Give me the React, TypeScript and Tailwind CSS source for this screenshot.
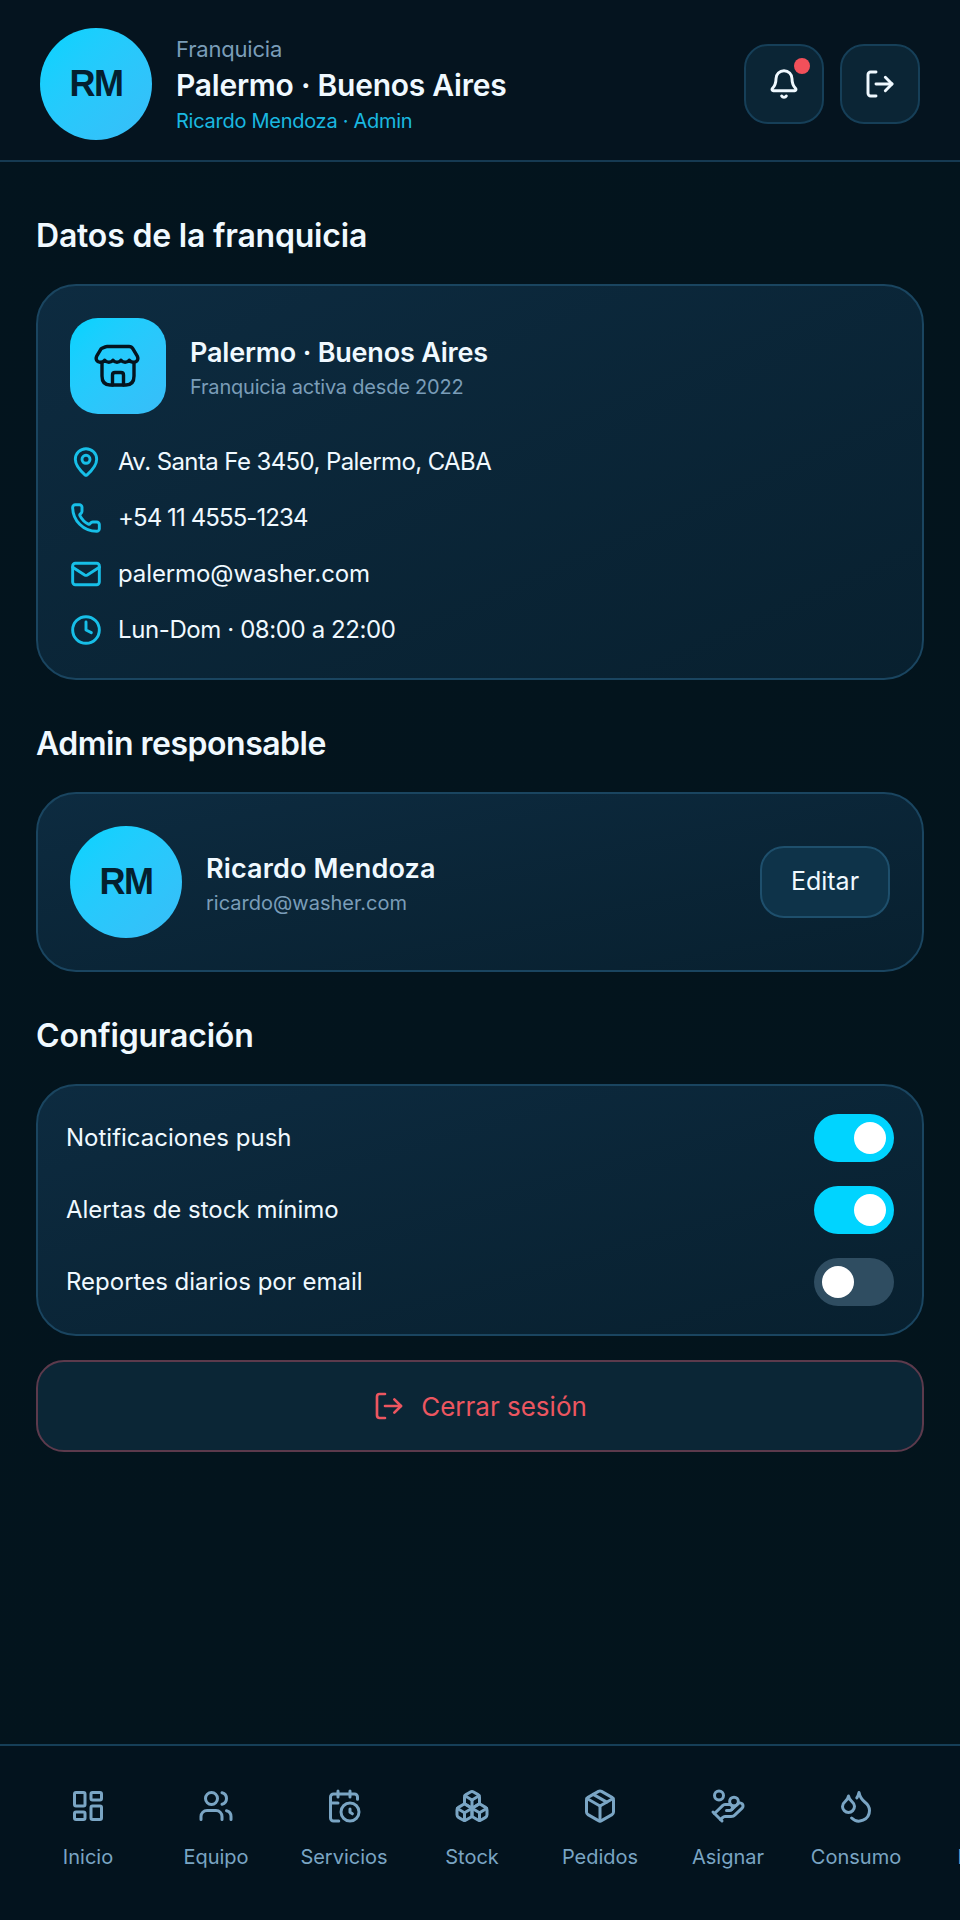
import React from "react";
import { Bell, LogOut, MapPin, Phone, Mail, Clock, LayoutDashboard, Users, CalendarClock, Boxes, Package, HandCoins, Droplets, UserRound } from "lucide-react";

const body = "font-['Inter','Liberation_Sans',sans-serif]";

function StoreIcon() {
  return (
    <svg width="48" height="48" viewBox="0 0 48 48" fill="none" stroke="#04141f" strokeWidth="3.4" strokeLinecap="round" strokeLinejoin="round">
      <path d="M13 4.500h22c1.600 0 3 .8 3.800 2.200l4.500 7.500c1.500 3-.4 6-3.300 6-2 0-3.900-.8-4.700-2-.9 1.200-2.500 2-4.200 2s-3.200-.8-4.100-2c-.9 1.200-2.400 2-4 2s-3.100-.8-4-2c-.9 1.200-2.400 2-4.100 2s-3.300-.8-4.200-2c-.8 1.200-2.700 2-4.700 2-2.900 0-4.800-3-3.300-6l4.500-7.500C10 5.300 11.400 4.500 13 4.500Z" />
      <path d="M8 21v13c0 6 2.500 9 8 9h16c5.500 0 8-3 8-9V21" />
      <path d="M18.500 43V33c0-1.500 1-2.500 2.500-2.500h6c1.500 0 2.500 1 2.500 2.500v10" />
    </svg>
  );
}

function Avatar() {
  return (
    <div className="flex h-[112px] w-[112px] shrink-0 items-center justify-center rounded-full bg-gradient-to-br from-[#00d4ff] to-[#38bdf8]">
      <span className="font-['Liberation_Sans',sans-serif] text-[36px] font-bold tracking-[-1.5px] text-[#04202f]">RM</span>
    </div>
  );
}

function Section({ title, className }: { title: string; className: string }) {
  return <h2 className={`${className} text-[32px] leading-[40px] font-semibold text-[#f0f9ff]`}>{title}</h2>;
}

function Toggle({ on }: { on: boolean }) {
  return (
    <div className={`flex h-[48px] w-[80px] items-center rounded-full px-2 ${on ? "justify-end bg-[#00d4ff]" : "justify-start bg-[#2f4d61]"}`}>
      <div className="h-8 w-8 rounded-full bg-white" />
    </div>
  );
}

const card = "rounded-[40px] border-2 border-[#1a4560] bg-gradient-to-br from-[#0d2b40] to-[#08202f]";

const rows = [
  { Icon: MapPin, text: "Av. Santa Fe 3450, Palermo, CABA", track: "tracking-[-0.6px]" },
  { Icon: Phone, text: "+54 11 4555-1234", track: "tracking-[-0.9px]" },
  { Icon: Mail, text: "palermo@washer.com", track: "tracking-[-0.1px]" },
  { Icon: Clock, text: "Lun-Dom · 08:00 a 22:00", track: "tracking-[-0.4px]" },
];

const nav = [
  { Icon: LayoutDashboard, label: "Inicio", track: "" },
  { Icon: Users, label: "Equipo", track: "" },
  { Icon: CalendarClock, label: "Servicios", track: "" },
  { Icon: Boxes, label: "Stock", track: "" },
  { Icon: Package, label: "Pedidos", track: "" },
  { Icon: HandCoins, label: "Asignar", track: "" },
  { Icon: Droplets, label: "Consumo", track: "" },
  { Icon: UserRound, label: "Perfil", track: "tracking-[0.6px]" },
];

export default function App() {
  return (
    <div className={`${body} flex h-[1920px] w-[960px] flex-col overflow-hidden bg-gradient-to-br from-[#03141e] to-[#03141c]`}>
      <header className="flex h-[162px] shrink-0 items-center justify-between border-b-2 border-[#163a52] bg-[#05141f] pt-2 pr-10 pl-10">
        <div className="flex items-center gap-6">
          <Avatar />
          <div className="flex flex-col pt-[2px]">
            <span className="text-[22px] leading-[30px] tracking-[-0.2px] text-[#7a9db8]">Franquicia</span>
            <span className="text-[30px] leading-[42px] font-semibold tracking-[-0.25px] text-[#f0f9ff]">Palermo · Buenos Aires</span>
            <span className="text-[20px] leading-[30px] tracking-[-0.27px] text-[#1ab8e0]">Ricardo Mendoza · Admin</span>
          </div>
        </div>
        <div className="flex gap-4">
          <button className="relative flex h-20 w-20 items-center justify-center rounded-[24px] border-2 border-[#163f58] bg-[#0b2535]">
            <Bell size={32} strokeWidth={2.2} className="text-[#f0f9ff]" />
            <span className="absolute top-[12px] right-[12px] h-4 w-4 rounded-full bg-[#f2505a]" />
          </button>
          <button className="flex h-20 w-20 items-center justify-center rounded-[24px] border-2 border-[#163f58] bg-[#0b2535]">
            <LogOut size={32} strokeWidth={2.2} className="text-[#f0f9ff]" />
          </button>
        </div>
      </header>

      <main className="flex flex-1 flex-col px-9">
        <Section title="Datos de la franquicia" className="mt-[54px] tracking-[-0.2px]" />
        <div className={`${card} mt-[28px] flex h-[396px] flex-col px-[32px] pt-[32px]`}>
          <div className="flex items-center gap-6">
            <div className="flex h-24 w-24 items-center justify-center rounded-[28px] bg-gradient-to-br from-[#00d4ff] to-[#38bdf8]">
              <StoreIcon />
            </div>
            <div className="flex flex-col pt-1">
              <span className="text-[27px] leading-[38px] font-semibold tracking-[-0.2px] text-[#f0f9ff]">Palermo · Buenos Aires</span>
              <span className="text-[20px] leading-[30px] tracking-[-0.2px] text-[#7a9db8]">Franquicia activa desde 2022</span>
            </div>
          </div>
          <div className="mt-[20px] flex flex-col">
            {rows.map(({ Icon, text, track }) => (
              <div key={text} className="flex h-[56px] items-center gap-[16px]">
                <Icon size={32} strokeWidth={2.2} className="text-[#17bfe8]" />
                <span className={`text-[24px] text-[#f0f9ff] ${track}`}>{text}</span>
              </div>
            ))}
          </div>
        </div>

        <Section title="Admin responsable" className="mt-[44px] tracking-[-0.5px]" />
        <div className={`${card} mt-[28px] flex h-[180px] items-center justify-between px-[32px]`}>
          <div className="flex items-center gap-6">
            <Avatar />
            <div className="flex flex-col pt-1">
              <span className="text-[27px] leading-[38px] font-semibold tracking-[0.15px] text-[#f0f9ff]">Ricardo Mendoza</span>
              <span className="text-[20px] leading-[30px] text-[#7a9db8]">ricardo@washer.com</span>
            </div>
          </div>
          <button className="flex h-[72px] w-[130px] items-center justify-center rounded-[24px] border-2 border-[#1e4f6c] bg-[#0e3349] text-[25px] text-[#f0f9ff]">Editar</button>
        </div>

        <Section title="Configuración" className="mt-[44px] tracking-[-0.2px]" />
        <div className={`${card} mt-[28px] flex h-[252px] flex-col justify-center gap-6 px-[28px]`}>
          {[
            ["Notificaciones push", true],
            ["Alertas de stock mínimo", true],
            ["Reportes diarios por email", false],
          ].map(([t, on]) => (
            <div key={t as string} className="flex items-center justify-between">
              <span className="text-[24px] text-[#f0f9ff]">{t as string}</span>
              <Toggle on={on as boolean} />
            </div>
          ))}
        </div>
        <button className="mt-6 flex h-[92px] items-center justify-center gap-4 rounded-[28px] border-2 border-[#5c3a4c] bg-[#0b2636] text-[26px] text-[#ec5660]">
          <LogOut size={32} strokeWidth={2} />
          Cerrar sesión
        </button>
      </main>

      <nav className="flex h-[176px] shrink-0 items-start overflow-hidden border-t-2 border-[#163f58] bg-[#03131e] pl-6">
        {nav.map(({ Icon, label, track }) => (
          <div key={label} className="flex w-[128px] shrink-0 flex-col items-center pt-[42px]">
            <Icon size={36} strokeWidth={2} className="text-[#7aa5c4]" />
            <span className={`mt-[18px] text-[20px] leading-[30px] text-[#7aa5c4] ${track}`}>{label}</span>
          </div>
        ))}
      </nav>
    </div>
  );
}
